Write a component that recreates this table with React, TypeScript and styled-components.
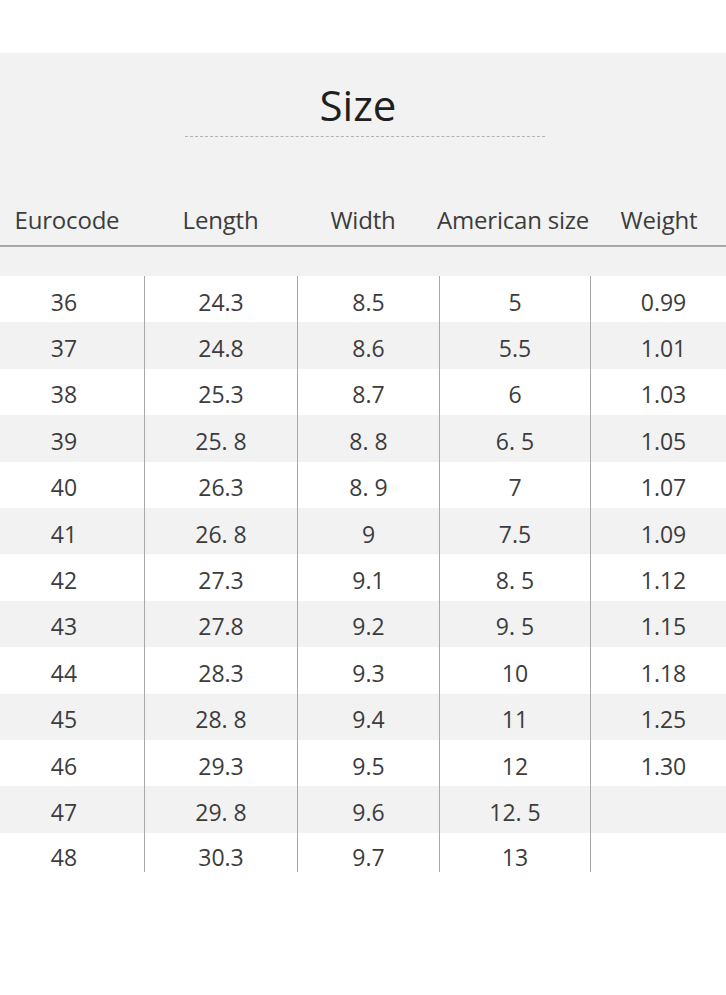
import React from 'react';
import styled, { createGlobalStyle } from 'styled-components';

const colors = {
  panel: '#f2f2f2',
  stripe: '#f2f2f2',
  white: '#ffffff',
  text: '#3c3c3c',
  title: '#1f1f1f',
  rule: '#b4b4b4',
  divider: '#a8a8a8',
};

const GlobalStyle = createGlobalStyle`
  html, body {
    margin: 0;
    padding: 0;
    background: ${colors.white};
    overflow: hidden;
  }
  body {
    font-family: "Open Sans", "Noto Sans", sans-serif;
  }
`;

// column widths; the table is wider than the window and clipped on both sides
const columns = '160px 153px 142px 151px 146px';

const Page = styled.div`
  width: 726px;
  height: 995px;
  padding-top: 53px;
  box-sizing: border-box;
  overflow: hidden;
`;

const HeaderPanel = styled.div`
  height: 194px;
  box-sizing: border-box;
  background: ${colors.panel};
  padding-top: 27px;
  display: flex;
  flex-direction: column;
  border-bottom: 2px solid ${colors.divider};
`;

const Title = styled.h1`
  margin: 0;
  font-size: 42px;
  line-height: 50px;
  font-weight: 400;
  color: ${colors.title};
  text-align: center;
  transform: translateX(-5px);
`;

const DashedRule = styled.div`
  width: 360px;
  margin: 6px 0 0 185px;
  border-top: 1px dashed ${colors.rule};
`;

const Table = styled.div`
  margin-left: -16px;
  width: 752px;
`;

const HeaderRow = styled(Table)`
  margin-top: auto;
  padding-bottom: 10px;
  display: grid;
  grid-template-columns: ${columns};
`;

const HeaderCell = styled.div<{ $shift: number }>`
  font-size: 24px;
  line-height: 30px;
  color: ${colors.text};
  text-align: center;
  white-space: nowrap;
  letter-spacing: -0.2px;
  transform: translateX(${(p) => p.$shift}px);
`;

const Spacer = styled.div`
  height: 29px;
  background: ${colors.panel};
`;

const Row = styled.div<{ $striped: boolean; $last?: boolean }>`
  display: grid;
  grid-template-columns: ${columns};
  height: ${(p) => (p.$last ? '39px' : '46.4px')};
  background: ${(p) => (p.$striped ? colors.stripe : colors.white)};
`;

const Cell = styled.div<{ $last?: boolean }>`
  display: flex;
  align-items: center;
  justify-content: center;
  box-sizing: border-box;
  padding-top: ${(p) => (p.$last ? '10px' : '6px')};
  font-size: 23px;
  line-height: 23px;
  color: ${colors.text};

  & + & {
    border-left: 1px solid ${colors.divider};
  }
`;

const headers: { label: string; shift: number }[] = [
  { label: 'Eurocode', shift: 3 },
  { label: 'Length', shift: 0 },
  { label: 'Width', shift: -5 },
  { label: 'American size', shift: -2 },
  { label: 'Weight', shift: -4 },
];

const rows: string[][] = [
  ['36', '24.3', '8.5', '5', '0.99'],
  ['37', '24.8', '8.6', '5.5', '1.01'],
  ['38', '25.3', '8.7', '6', '1.03'],
  ['39', '25. 8', '8. 8', '6. 5', '1.05'],
  ['40', '26.3', '8. 9', '7', '1.07'],
  ['41', '26. 8', '9', '7.5', '1.09'],
  ['42', '27.3', '9.1', '8. 5', '1.12'],
  ['43', '27.8', '9.2', '9. 5', '1.15'],
  ['44', '28.3', '9.3', '10', '1.18'],
  ['45', '28. 8', '9.4', '11', '1.25'],
  ['46', '29.3', '9.5', '12', '1.30'],
  ['47', '29. 8', '9.6', '12. 5', ''],
  ['48', '30.3', '9.7', '13', ''],
];

const App: React.FC = () => {
  return (
    <>
      <GlobalStyle />
      <Page>
        <HeaderPanel>
          <Title>Size</Title>
          <DashedRule />
          <HeaderRow>
            {headers.map((h) => (
              <HeaderCell key={h.label} $shift={h.shift}>
                {h.label}
              </HeaderCell>
            ))}
          </HeaderRow>
        </HeaderPanel>
        <Spacer />
        <Table>
          {rows.map((row, i) => {
            const last = i === rows.length - 1;
            return (
              <Row key={row[0]} $striped={i % 2 === 1} $last={last}>
                {row.map((value, j) => (
                  <Cell key={j} $last={last}>
                    {value}
                  </Cell>
                ))}
              </Row>
            );
          })}
        </Table>
      </Page>
    </>
  );
};

export default App;
